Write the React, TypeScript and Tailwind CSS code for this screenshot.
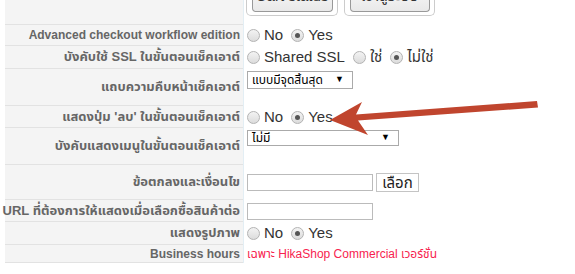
const font = "font-['Liberation_Sans','Tahoma','Noto_Sans_Thai','DejaVu_Sans',sans-serif]";

function Radio({ checked = false }: { checked?: boolean }) {
  return (
    <span className="inline-flex h-[13px] w-[13px] shrink-0 items-center justify-center rounded-full border border-[#b3b3b3] bg-gradient-to-b from-[#f3f3f3] to-[#dcdcdc]">
      {checked && <span className="h-[5px] w-[5px] rounded-full bg-[#555]" />}
    </span>
  );
}

function Option({ label, checked }: { label: string; checked?: boolean }) {
  return (
    <label className="mr-[8px] flex items-center gap-[4px]">
      <Radio checked={checked} />
      <span>{label}</span>
    </label>
  );
}

type Row = {
  label: string;
  h: number;
  en?: boolean;
  top?: boolean;
  content: React.ReactNode;
};

function Select({ text, w, h }: { text: string; w: number; h: number }) {
  return (
    <div
      className="flex items-center justify-between border border-[#aaa] bg-white pl-[4px] pr-[8px] text-[12px] text-black"
      style={{ width: w, height: h }}
    >
      <span>{text}</span>
      <span className="text-[9px]">▼</span>
    </div>
  );
}

const rows: Row[] = [
  {
    label: "Advanced checkout workflow edition",
    h: 21,
    en: true,
    content: (
      <div className="flex">
        <Option label="No" />
        <Option label="Yes" checked />
      </div>
    ),
  },
  {
    label: "บังคับใช้ SSL ในขั้นตอนเช็คเอาต์",
    h: 23,
    content: (
      <div className="flex">
        <Option label="Shared SSL" />
        <Option label="ใช่" />
        <Option label="ไม่ใช่" checked />
      </div>
    ),
  },
  {
    label: "แถบความคืบหน้าเช็คเอาต์",
    h: 37,
    top: true,
    content: <Select text="แบบมีจุดสิ้นสุด" w={106} h={18} />,
  },
  {
    label: "แสดงปุ่ม 'ลบ' ในขั้นตอนเช็คเอาต์",
    h: 22,
    content: (
      <div className="flex">
        <Option label="No" />
        <Option label="Yes" checked />
      </div>
    ),
  },
  {
    label: "บังคับแสดงเมนูในขั้นตอนเช็คเอาต์",
    h: 37,
    top: true,
    content: <Select text="ไม่มี" w={152} h={16} />,
  },
  {
    label: "ข้อตกลงและเงื่อนไข",
    h: 35,
    content: (
      <div className="flex items-center gap-[3px]">
        <div className="h-[17px] w-[126px] border border-[#bbb] bg-white" />
        <button className="h-[19px] w-[43px] border border-[#c4c4c4] bg-white text-[15px] leading-none text-[#222]">
          เลือก
        </button>
      </div>
    ),
  },
  {
    label: "URL ที่ต้องการให้แสดงเมื่อเลือกซื้อสินค้าต่อ",
    h: 22,
    content: <div className="h-[17px] w-[126px] border border-[#bbb] bg-white" />,
  },
  {
    label: "แสดงรูปภาพ",
    h: 23,
    content: (
      <div className="flex">
        <Option label="No" />
        <Option label="Yes" checked />
      </div>
    ),
  },
  {
    label: "Business hours",
    h: 18,
    en: true,
    content: (
      <span className="text-[12px] text-[#f7234f]">เฉพาะ HikaShop Commercial เวอร์ชั่น</span>
    ),
  },
];

export default function App() {
  return (
    <div className={`relative h-[274px] w-[575px] overflow-hidden bg-white ${font}`}>
      <div className="-mt-[12px] pl-[5px]">
        {/* top row with cut-off buttons */}
        <div className="flex">
          <div className="h-[37px] w-[238px] border-b border-[#e2e2e2] bg-[#f4f4f4]" />
          <div className="flex h-[37px] gap-[6px] border-l border-[#e3eef4] pl-[2px]">
            <div className="flex h-[28px] w-[92px] justify-center rounded-b-[5px] border border-t-0 border-[#ccc]">
              <button className="flex h-[24px] w-[81px] items-end justify-center rounded-b-[4px] border border-t-0 border-[#999] bg-gradient-to-b from-[#f7f7f7] to-[#e9e9e9] pb-[8px] text-[15px] leading-[15px] text-[#333]">
                Cart status
              </button>
            </div>
            <div className="flex h-[28px] w-[91px] justify-center rounded-b-[5px] border border-t-0 border-[#ccc]">
              <button className="flex h-[24px] w-[80px] items-end justify-center rounded-b-[4px] border border-t-0 border-[#999] bg-gradient-to-b from-[#f7f7f7] to-[#e9e9e9] pb-[8px] text-[15px] leading-[15px] text-[#333]">
                เข้าสู่ระบบ
              </button>
            </div>
          </div>
        </div>
        {rows.map((r) => (
          <div key={r.label} className="flex">
            <div
              className={`flex w-[238px] shrink-0 items-center justify-end border-b border-[#e2e2e2] bg-[#f4f4f4] pr-[3px] font-bold whitespace-nowrap text-[#666] ${
                r.en ? "text-[12px]" : "text-[13px]"
              }`}
              style={{ height: r.h }}
            >
              {r.label}
            </div>
            <div
              className={`flex flex-1 border-l border-[#e3eef4] pl-[3px] text-[15px] text-[#333] ${
                r.top ? "items-start pt-[2px]" : "items-center"
              }`}
              style={{ height: r.h }}
            >
              {r.content}
            </div>
          </div>
        ))}
      </div>
      {/* red arrow annotation */}
      <svg className="pointer-events-none absolute inset-0" width="575" height="274">
        <polygon
          points="330,120 362,102 356,114.5 537,101 538,107.5 358,120.5 368,135"
          fill="#c0452e"
        />
      </svg>
    </div>
  );
}
